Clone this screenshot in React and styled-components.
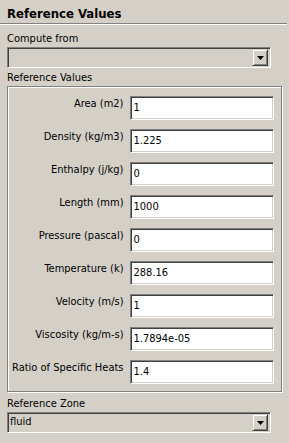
import React from "react";
import styled, { createGlobalStyle } from "styled-components";

const Global = createGlobalStyle`
  html, body { margin: 0; padding: 0; background: #d4d0c8; }
  body { font-family: "DejaVu Sans", "Liberation Sans", sans-serif; font-stretch: condensed; font-size: 11px; color: #000; }
`;

const Panel = styled.div`
  width: 289px;
  height: 443px;
  background: #d4d0c8;
  box-sizing: border-box;
  display: flex;
  flex-direction: column;
`;

const Title = styled.div`
  font-family: "DejaVu Sans", "Liberation Sans", sans-serif;
  font-stretch: condensed;
  font-weight: bold;
  font-size: 13px;
  line-height: 16px;
  padding: 6px 7px 1px;
`;

const Separator = styled.div`
  height: 0;
  margin-right: 2px;
  border-top: 1px solid #808080;
  border-bottom: 1px solid #fff;
`;

const Body = styled.div`
  display: flex;
  flex-direction: column;
  padding: 0 7px;
`;

const Caption = styled.div`
  line-height: 13px;
  margin-top: ${(p) => p.$top || 0}px;
  margin-bottom: 2px;
`;

const Combo = styled.div`
  width: 264px;
  height: 21px;
  box-sizing: border-box;
  border: 1px solid;
  border-color: #808080 #fff #fff #808080;
  box-shadow: inset 1px 1px 0 #404040, inset -1px -1px 0 #d4d0c8;
  background: #d4d0c8;
  display: flex;
  align-items: center;
  padding: 2px;
`;

const ComboText = styled.div`
  flex: 1;
  line-height: 14px;
  margin-top: -1px;
`;

const DropButton = styled.div`
  width: 16px;
  height: 17px;
  box-sizing: border-box;
  border: 1px solid;
  border-color: #d4d0c8 #404040 #404040 #d4d0c8;
  box-shadow: inset 1px 1px 0 #fff, inset -1px -1px 0 #808080;
  background: #d4d0c8;
  display: flex;
  align-items: center;
  justify-content: center;
`;

const GroupBox = styled.div`
  width: 275px;
  box-sizing: border-box;
  border: 1px solid #808080;
  box-shadow: inset 1px 1px 0 #fff, 1px 1px 0 #fff;
  padding: 9px 8px 7px 4px;
  display: grid;
  grid-template-columns: 1fr 144px;
  column-gap: 6px;
  row-gap: 9px;
`;

const Label = styled.div`
  text-align: right;
  white-space: nowrap;
  line-height: 13px;
  padding-top: 1px;
`;

const Field = styled.div`
  height: 24px;
  box-sizing: border-box;
  border: 1px solid;
  border-color: #808080 #fff #fff #808080;
  box-shadow: inset 1px 1px 0 #404040, inset -1px -1px 0 #d4d0c8;
  background: #fff;
  padding: 4px 3px 0 3px;
  line-height: 14px;
`;

const Arrow = () => (
  <svg width="7" height="4" viewBox="0 0 7 4">
    <path d="M0 0h7L3.5 4z" fill="#000" />
  </svg>
);

const rows = [
  ["Area (m2)", "1"],
  ["Density (kg/m3)", "1.225"],
  ["Enthalpy (j/kg)", "0"],
  ["Length (mm)", "1000"],
  ["Pressure (pascal)", "0"],
  ["Temperature (k)", "288.16"],
  ["Velocity (m/s)", "1"],
  ["Viscosity (kg/m-s)", "1.7894e-05"],
  ["Ratio of Specific Heats", "1.4"],
];

export default function App() {
  return (
    <Panel>
      <Global />
      <Title>Reference Values</Title>
      <Separator />
      <Body>
        <Caption $top={7}>Compute from</Caption>
        <Combo>
          <ComboText />
          <DropButton>
            <Arrow />
          </DropButton>
        </Combo>
        <Caption $top={3}>Reference Values</Caption>
        <GroupBox>
          {rows.map(([l, v]) => (
            <React.Fragment key={l}>
              <Label>{l}</Label>
              <Field>{v}</Field>
            </React.Fragment>
          ))}
        </GroupBox>
        <Caption $top={5}>Reference Zone</Caption>
        <Combo>
          <ComboText>fluid</ComboText>
          <DropButton>
            <Arrow />
          </DropButton>
        </Combo>
      </Body>
    </Panel>
  );
}
